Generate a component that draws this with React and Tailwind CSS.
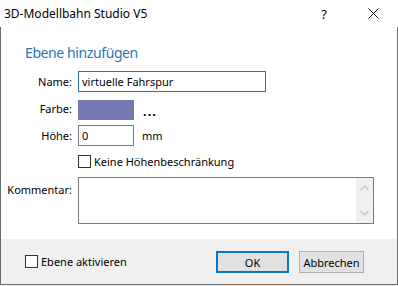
import React from "react";

const font = { fontFamily: '"Segoe UI", "Noto Sans", "Open Sans", sans-serif' };

function Check() {
  return <span className="inline-block w-[13px] h-[13px] border border-[#333333] bg-white shrink-0" />;
}

export default function App() {
  return (
    <div className="w-[398px] h-[286px] bg-white flex flex-col text-[11px] text-black leading-none overflow-hidden" style={font}>
      {/* title bar */}
      <div className="h-[27px] flex items-center shrink-0">
        <span className="pl-[4px] pt-[1px] text-[12px]">3D-Modellbahn Studio V5</span>
        <span className="ml-auto mr-[41px] pt-[1px] text-[13px]">?</span>
        <svg width="11" height="11" viewBox="0 0 11 11" className="mr-[19px]">
          <path d="M0.5 0.5 L10.5 10.5 M10.5 0.5 L0.5 10.5" stroke="#111" strokeWidth="1" />
        </svg>
      </div>
      {/* body */}
      <div className="flex-1 flex flex-col border-l border-r border-b border-[#6a6a6a]">
        <div className="flex-1 flex flex-col pt-[16px]">
          <div className="pl-[24px] text-[14px] tracking-[-0.4px] text-[#2f74b5] h-[20px] flex items-center">Ebene hinzufügen</div>
          <div className="mt-[8px] grid grid-cols-[71px_1fr] gap-x-[6px] items-center">
            <div className="text-right">Name:</div>
            <div className="h-[21px] w-[188px] border border-[#26799a] flex items-center pl-[3px]">virtuelle Fahrspur</div>

            <div className="text-right mt-[8px] pb-[3px]">Farbe:</div>
            <div className="mt-[8px] flex items-center">
              <div className="h-[20px] w-[56px] bg-[#7579b1]" />
              <span className="ml-[9px] text-[13px] font-bold tracking-[1px] pt-[2px]">...</span>
            </div>

            <div className="text-right mt-[5px]">Höhe:</div>
            <div className="mt-[5px] flex items-center">
              <div className="h-[21px] w-[56px] border border-[#7a7a7a] flex items-center pl-[3px]">0</div>
              <span className="ml-[8px]">mm</span>
            </div>

            <div />
            <div className="mt-[9px] flex items-center gap-[3px]">
              <Check />
              <span>Keine Höhenbeschränkung</span>
            </div>

            <div className="text-right self-start mt-[14px] pt-[2px]">Kommentar:</div>
            <div className="mt-[9px] h-[47px] w-[296px] border border-[#7a7a7a] flex">
              <div className="flex-1" />
              <div className="w-[17px] bg-[#f0f0f0] flex flex-col items-center justify-between py-[7px]">
                <svg width="9" height="6" viewBox="0 0 9 6"><path d="M0.5 5 L4.5 1 L8.5 5" fill="none" stroke="#c0c0c0" strokeWidth="1.2" /></svg>
                <svg width="9" height="6" viewBox="0 0 9 6"><path d="M0.5 1 L4.5 5 L8.5 1" fill="none" stroke="#c0c0c0" strokeWidth="1.2" /></svg>
              </div>
            </div>
          </div>
        </div>
        {/* footer */}
        <div className="h-[45px] bg-[#f0f0f0] flex items-center shrink-0">
          <div className="ml-[24px] flex items-center gap-[3px]">
            <Check />
            <span>Ebene aktivieren</span>
          </div>
          <div className="ml-auto mr-[33px] flex gap-[10px] pt-[1px]">
            <button className="w-[73px] h-[22px] bg-[#e1e1e1] border-2 border-[#0078d7] flex items-center justify-center">OK</button>
            <button className="w-[65px] h-[22px] bg-[#e1e1e1] border border-[#adadad] flex items-center justify-center">Abbrechen</button>
          </div>
        </div>
      </div>
      <div className="h-[1px] bg-[#f0f0f0]" />
    </div>
  );
}
